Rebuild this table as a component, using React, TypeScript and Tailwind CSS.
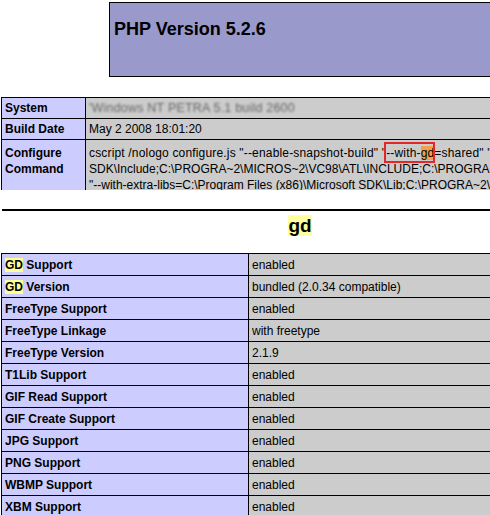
import React from 'react';

type Row = {
  label: React.ReactNode;
  value: React.ReactNode;
};

const hl = (s: string) => <span className="bg-[#ffff99]">{s}</span>;

const gdRows: Row[] = [
  { label: <>{hl('GD')} Support</>, value: 'enabled' },
  { label: <>{hl('GD')} Version</>, value: 'bundled (2.0.34 compatible)' },
  { label: 'FreeType Support', value: 'enabled' },
  { label: 'FreeType Linkage', value: 'with freetype' },
  { label: 'FreeType Version', value: '2.1.9' },
  { label: 'T1Lib Support', value: 'enabled' },
  { label: 'GIF Read Support', value: 'enabled' },
  { label: 'GIF Create Support', value: 'enabled' },
  { label: 'JPG Support', value: 'enabled' },
  { label: 'PNG Support', value: 'enabled' },
  { label: 'WBMP Support', value: 'enabled' },
  { label: 'XBM Support', value: 'enabled' },
];

function ConfigureValue() {
  return (
    <div className="leading-[16px] whitespace-nowrap">
      <div className="tracking-[0.17px]">
        cscript /nologo configure.js &quot;--enable-snapshot-build&quot; &quot;
        <span className="relative">
          --with-<span className="bg-[#f2a04a]">gd</span>
          <span className="absolute -left-[2px] -right-[1px] -top-[4px] -bottom-[3px] border-2 border-[#e3262b]" />
        </span>
        =shared&quot; &quot;--with-extra-includes=C:\Program Files (x86)\Microsoft
      </div>
      <div>SDK\Include;C:\PROGRA~2\MICROS~2\VC98\ATL\INCLUDE;C:\PROGRA~2\MICROS~2\VC98\INCLUDE</div>
      <div>&quot;--with-extra-libs=C:\Program Files (x86)\Microsoft SDK\Lib;C:\PROGRA~2\MICROS~2\VC98\LIB</div>
    </div>
  );
}

export default function App() {
  return (
    <div className="w-[490px] h-[515px] overflow-hidden bg-white text-black font-['Liberation_Sans',Arial,sans-serif]">
      <div className="w-[620px]">
        {/* header */}
        <div className="ml-[109px] mt-[2px] h-[75px] w-[500px] border border-black bg-[#9999cc] pl-[4px] pt-[14px]">
          <h1 className="text-[18px] font-bold leading-[24px]">PHP Version 5.2.6</h1>
        </div>

        {/* system table */}
        <div className="mt-[20px] h-[93px] overflow-hidden">
          <table className="w-[600px] border-collapse text-[12px] ml-[1px]">
            <tbody>
              <tr className="h-[21px]">
                <td className="w-[84px] border border-black bg-[#ccccff] px-[3px] font-bold">System</td>
                <td className="border border-black bg-[#cccccc] px-[3px] text-[#666]">
                  <span className="blur-[1.3px] whitespace-nowrap text-[12.5px] tracking-[0.2px]">'Windows NT PETRA 5.1 build 2600</span>
                </td>
              </tr>
              <tr className="h-[21px]">
                <td className="border border-black bg-[#ccccff] px-[3px] font-bold">Build Date</td>
                <td className="border border-black bg-[#cccccc] px-[3px]">May 2 2008 18:01:20</td>
              </tr>
              <tr>
                <td className="border border-black bg-[#ccccff] px-[3px] pt-[5px] pb-[6px] font-bold leading-[16px] align-top">
                  Configure<br />Command
                </td>
                <td className="border border-black bg-[#cccccc] px-[3px] pt-[5px] pb-[6px] align-top overflow-hidden max-w-[515px]">
                  <ConfigureValue />
                </td>
              </tr>
            </tbody>
          </table>
        </div>

        <div className="mt-[19px] ml-[2px] h-[2px] bg-black" />

        <div className="w-[600px] mt-[2px] flex justify-center">
          <h2 className="text-[19px] font-bold leading-[25px]">
            <span className="bg-[#ffffa0]">gd</span>
          </h2>
        </div>

        {/* gd table */}
        <table className="mt-[15px] ml-[1px] w-[600px] border-collapse text-[12px]">
          <tbody>
            {gdRows.map((row, i) => (
              <tr key={i} className="h-[22px]">
                <td className="w-[247px] border border-black bg-[#ccccff] px-[3px] font-bold">{row.label}</td>
                <td className="border border-black bg-[#cccccc] px-[3px]">{row.value}</td>
              </tr>
            ))}
          </tbody>
        </table>
      </div>
    </div>
  );
}
